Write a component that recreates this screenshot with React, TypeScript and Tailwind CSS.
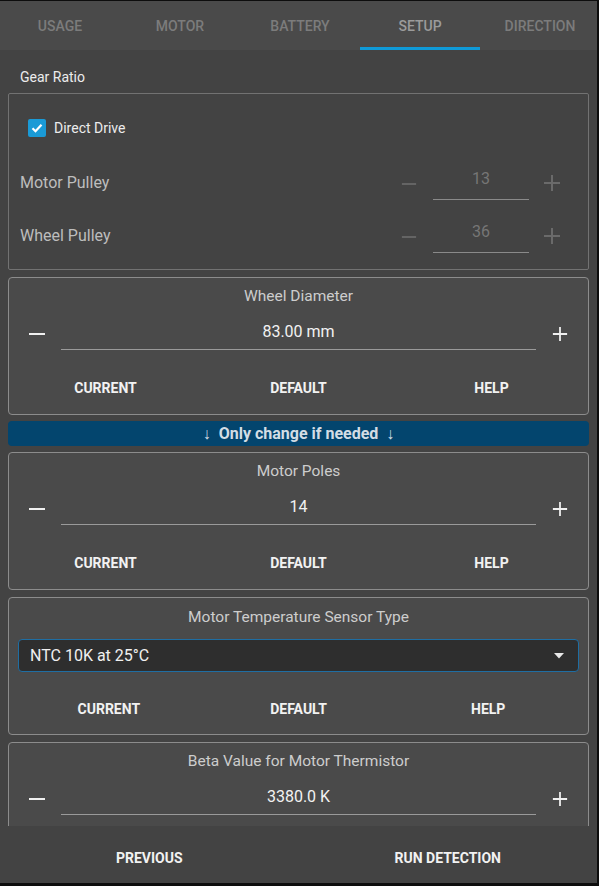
import React from "react";

const font = { fontFamily: "Roboto, 'Liberation Sans', sans-serif" };

function Minus({ className = "" }: { className?: string }) {
  return (
    <svg className={className} width="18" height="18" viewBox="0 0 18 18" fill="none" stroke="currentColor" strokeWidth={2}>
      <path d="M1 9h16" />
    </svg>
  );
}

function Plus({ className = "" }: { className?: string }) {
  return (
    <svg className={className} width="18" height="18" viewBox="0 0 18 18" fill="none" stroke="currentColor" strokeWidth={2}>
      <path d="M1 9h16M9 1v16" />
    </svg>
  );
}

function PulleyRow({ label, value, top }: { label: string; value: string; top: string }) {
  return (
    <div className={`flex items-center h-[40px] ${top}`}>
      <span className="text-[16px] text-[#bdbdbd] flex-1">{label}</span>
      <div className="flex items-center mr-[16px] text-[#6a6a6a]">
        <Minus className="w-[16px] mt-[2px]" />
        <div className="w-[96px] h-[34px] ml-[16px] mr-[14px] border-b border-[#8a8a8a] flex items-center justify-center pb-[7px] text-[16px] text-[#767676]">
          {value}
        </div>
        <Plus />
      </div>
    </div>
  );
}

function ActionButtons({ px = "px-0" }: { px?: string }) {
  return (
    <div className={`flex h-[36px] ${px}`}>
      {["CURRENT", "DEFAULT", "HELP"].map((b) => (
        <button key={b} className="flex-1 text-[14px] font-bold text-[#f2f2f2] pt-[2px]">
          {b}
        </button>
      ))}
    </div>
  );
}

function NumberCard({ title, value, mt }: { title: string; value: string; mt: string }) {
  return (
    <div className={`${mt} bg-[#4a4a4a] border border-[#8c8c8c] rounded-[4px] pt-[9px] pb-[9px] shrink-0`}>
      <div className="h-[20px] flex items-center justify-center text-[15.5px] text-[#cdcdcd]">{title}</div>
      <div className="flex items-start mt-[7px] pl-[19px] pr-[20px] text-[#f0f0f0]">
        <Minus className="mt-[11px]" />
        <div className="flex-1 h-[36px] ml-[15px] mr-[16px] border-b border-[#9a9a9a] flex items-center justify-center text-[16px] text-[#f2f2f2]">
          {value}
        </div>
        <Plus className="mt-[11px] w-[16px]" />
      </div>
      <div className="mt-[19px]">
        <ActionButtons />
      </div>
    </div>
  );
}

export default function App() {
  const tabs = ["USAGE", "MOTOR", "BATTERY", "SETUP", "DIRECTION"];
  return (
    <div className="w-[599px] h-[886px] bg-[#0d0d0d] pt-px pr-[2px] pb-[3px]" style={font}>
      <div className="flex flex-col h-full bg-[#434343]">
        {/* Tabs */}
        <div className="flex h-[49px] bg-[#4a4a4a] shrink-0 overflow-hidden">
          {tabs.map((t) => (
            <div key={t} className="relative w-[120px] shrink-0 flex items-center justify-center pt-[1px]">
              <span className={`text-[14px] font-medium ${t === "SETUP" ? "text-[#9b9b9b]" : "text-[#7c7c7c]"}`}>{t}</span>
              {t === "SETUP" && <div className="absolute left-0 right-0 bottom-0 h-[3px] bg-[#0f9ad8]" />}
            </div>
          ))}
        </div>

        {/* Scroll area */}
        <div className="flex-1 overflow-hidden px-2 pt-[19px] flex flex-col">
          <div className="h-[16px] ml-3 flex items-center text-[14px] text-[#ececec]">Gear Ratio</div>

          <div className="mt-[8px] border border-[#727272] rounded-[2px] px-[11px] pt-[25px] pb-[13px] shrink-0">
            <div className="flex items-center h-[18px] pl-[8px]">
              <span className="w-[18px] h-[18px] rounded-[2px] bg-[#1a9ad6] flex items-center justify-center">
                <svg width="14" height="14" viewBox="0 0 14 14" fill="none" stroke="#fff" strokeWidth={2.2}>
                  <path d="M2.5 7.2l3 3 6-6.4" />
                </svg>
              </span>
              <span className="ml-[8px] text-[14px] text-[#ececec]">Direct Drive</span>
            </div>
            <PulleyRow label="Motor Pulley" value="13" top="mt-[26px]" />
            <PulleyRow label="Wheel Pulley" value="36" top="mt-[13px]" />
          </div>

          <NumberCard title="Wheel Diameter" value="83.00 mm" mt="mt-[7px]" />

          <div className="mt-[6px] h-[25px] rounded-[4px] bg-[#03456e] flex items-center justify-center gap-[8px] text-[16px] font-bold text-[#d3dde5] shrink-0">
            <span className="font-normal">↓</span>
            <span>Only change if needed</span>
            <span className="font-normal">↓</span>
          </div>

          <NumberCard title="Motor Poles" value="14" mt="mt-[6px]" />

          <div className="mt-[7px] bg-[#4a4a4a] border border-[#8c8c8c] rounded-[4px] pt-[10px] pb-[8px] shrink-0">
            <div className="h-[20px] flex items-center justify-center text-[15.5px] text-[#cdcdcd]">Motor Temperature Sensor Type</div>
            <div className="mt-[11px] mx-[9px] h-[33px] rounded-[4px] bg-[#2e2e2e] border border-[#1f6ea3] flex items-center pl-[11px] pr-[14px]">
              <span className="flex-1 text-[16px] text-[#f0f0f0]">NTC 10K at 25°C</span>
              <svg width="10" height="6" viewBox="0 0 10 6" fill="#e8e8e8">
                <path d="M0 0h10L5 5.5z" />
              </svg>
            </div>
            <div className="mt-[18px]">
              <ActionButtons px="px-[5px]" />
            </div>
          </div>

          <NumberCard title="Beta Value for Motor Thermistor" value="3380.0 K" mt="mt-[7px]" />
        </div>

        {/* Footer */}
        <div className="flex h-[57px] shrink-0 bg-[#434343] pt-[7px]">
          <button className="flex-1 text-[14px] font-bold text-[#f2f2f2]">PREVIOUS</button>
          <button className="flex-1 text-[14px] font-bold text-[#f2f2f2]">RUN DETECTION</button>
        </div>
      </div>
    </div>
  );
}
